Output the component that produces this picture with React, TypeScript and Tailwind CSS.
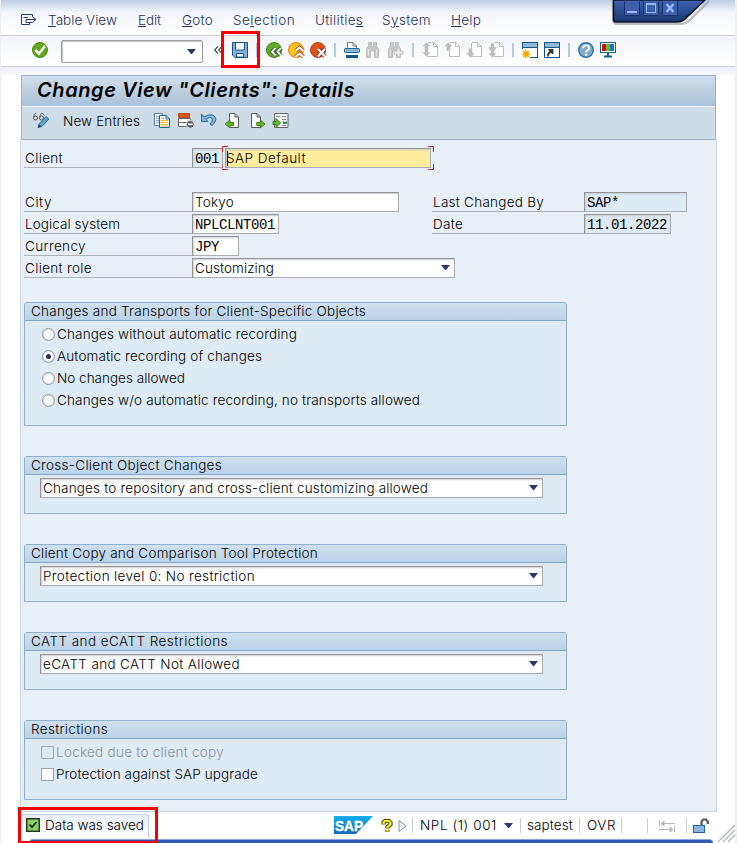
import { useLayoutEffect, useRef, useState, type ReactNode } from "react";

/* Text run whose tracking is adjusted so that it fills the given width. */
function T({ w, children, className = "" }: { w: number; children: ReactNode; className?: string }) {
  const ref = useRef<HTMLSpanElement>(null);
  const [spacing, setSpacing] = useState(0);
  useLayoutEffect(() => {
    const el = ref.current;
    if (!el) return;
    const n = (el.textContent ?? "").length;
    const natural = el.getBoundingClientRect().width - spacing * n;
    setSpacing((w - natural) / n);
  }, [w]);
  return (
    <span ref={ref} className={`inline-block shrink-0 whitespace-pre ${className}`} style={{ letterSpacing: `${spacing}px` }}>
      {children}
    </span>
  );
}

function Icon({ children, className = "mx-[3px]" }: { children: ReactNode; className?: string }) {
  return (
    <svg viewBox="0 0 16 16" className={`h-4 w-4 shrink-0 overflow-visible ${className}`} fill="none">
      {children}
    </svg>
  );
}

const Sep = () => (
  <div className="flex w-3 shrink-0 justify-center">
    <div className="h-[14px] w-0.5 bg-[#b5cde0]" />
  </div>
);

const Caret = ({ className = "" }: { className?: string }) => (
  <svg viewBox="0 0 9 5" className={`h-[5px] w-[9px] shrink-0 ${className}`}>
    <path d="M0 0H9L5 5H4Z" fill="#243a70" />
  </svg>
);

const mono = "font-['Liberation_Mono',monospace] text-[14px] tracking-[-0.4px] font-normal";

function Field({ className, children }: { className: string; children?: ReactNode }) {
  return (
    <div
      className={`flex h-5 shrink-0 items-center border border-[#a9adb1] border-t-[#929496] border-l-[#929496] pt-0.5 pl-0.5 leading-none shadow-[inset_1px_1px_2px_#c9ccd0] ${className}`}
    >
      {children}
    </div>
  );
}

function Label({ className = "w-[168px]", w, children }: { className?: string; w: number; children: string }) {
  return (
    <div className={`flex h-5 shrink-0 items-center border-b border-[#afb2b5] pt-0.5 pl-px ${className}`}>
      <T w={w}>{children}</T>
    </div>
  );
}

function Select({ className, w, children }: { className: string; w: number; children: string }) {
  return (
    <Field className={`justify-between bg-white pr-1 ${className}`}>
      <T w={w}>{children}</T>
      <Caret className="-mt-[3px]" />
    </Field>
  );
}

function Group({ title, w, className, children }: { title: string; w: number; className: string; children: ReactNode }) {
  return (
    <section className={`ml-[3px] w-[543px] shrink-0 rounded-t-[3px] border border-[#8fb0d0] bg-[#deeaf4] ${className}`}>
      <h2 className="flex h-[18px] items-center rounded-t-[2px] border-b border-[#83a5c8] bg-linear-to-b from-[#cfe0ef] to-[#bbd2e8] pl-1.5">
        <T w={w}>{title}</T>
      </h2>
      {children}
    </section>
  );
}

function Radio({ on, w, children }: { on?: boolean; w: number; children: string }) {
  return (
    <div className="flex h-[22px] items-center pl-[17px]">
      <div className="mr-0.5 mb-0.5 flex h-[13px] w-[13px] items-center justify-center rounded-full border border-[#92989e] bg-white shadow-[inset_0_0_2px_#b0b4b8]">
        {on && <div className="h-[5px] w-[5px] rounded-full bg-[#262b50]" />}
      </div>
      <T w={w}>{children}</T>
    </div>
  );
}

function Check({ off, w, children }: { off?: boolean; w: number; children: string }) {
  return (
    <div className={`flex h-[22px] items-center pl-4 ${off ? "text-[#8b9197]" : ""}`}>
      <div className={`mr-0.5 mb-0.5 h-[13px] w-[13px] border ${off ? "border-[#a5abb0] bg-[#dde7ef]" : "border-[#999ea3] bg-white"}`} />
      <T w={w}>{children}</T>
    </div>
  );
}

const OkIcon = () => (
  <svg viewBox="0 0 16 16" className="h-4 w-4 shrink-0">
    <circle cx="8" cy="8" r="7.5" fill="#62a71e" stroke="#438719" />
    <path d="M3.5 8L7 11.7L13 4" fill="none" stroke="#fff" strokeWidth="2.5" />
  </svg>
);

const SaveIcon = () => (
  <Icon>
    <path d="M.5.5H15.5V15.5H3L.5 13Z" fill="#86b3da" stroke="#12578c" />
    <path d="M3.5 1V8H12.5V1" fill="#fff" stroke="#12578c" />
    <path d="M4.5 15V11.5H11.5V15Z" fill="#fff" stroke="#12578c" />
  </Icon>
);

const BackIcon = () => (
  <Icon>
    <circle cx="8" cy="8" r="7.5" fill="#63ab25" stroke="#3f841f" />
    <path d="M9.5 6L6 9.7L9.5 13.5M15 6L11.5 9.7L15 13.5" stroke="#43692d" strokeWidth="4" />
    <path d="M9.5 6L6 9.7L9.5 13.5M15 6L11.5 9.7L15 13.5" stroke="#fff" strokeWidth="1.8" />
  </Icon>
);

const ExitIcon = () => (
  <Icon>
    <circle cx="8" cy="8" r="7.5" fill="#ffc31d" stroke="#e17b18" />
    <path d="M7.5 9L11.5 5.5L15.5 9M7.5 15L11.5 11.5L15.5 15" stroke="#c45b16" strokeWidth="4" />
    <path d="M7.5 9L11.5 5.5L15.5 9M7.5 15L11.5 11.5L15.5 15" stroke="#fff" strokeWidth="2" />
  </Icon>
);

const CancelIcon = () => (
  <Icon>
    <circle cx="8" cy="8" r="7.5" fill="#db5215" stroke="#b3441b" />
    <path d="M8 7L15 14.5M15 7L8 14.5" stroke="#8b2f18" strokeWidth="4" />
    <path d="M8 7L15 14.5M15 7L8 14.5" stroke="#fff" strokeWidth="2.2" />
  </Icon>
);

const PrintIcon = () => (
  <Icon>
    <path d="M3.5 7V.5H9L12.5 4V7" fill="#fff" stroke="#777" />
    <path d="M9 .5V4H12.5" stroke="#777" />
    <rect x=".5" y="6.5" width="15" height="4" rx="1" fill="#8db5d7" stroke="#1c6394" />
    <path d="M2 14.5H14" stroke="#12578c" strokeWidth="3" />
    <path d="M3 12.5H13" stroke="#fff" />
  </Icon>
);

const Binoculars = ({ plus }: { plus?: boolean }) => (
  <Icon className="mr-1 ml-0.5">
    <path d="M1.5 15.5V7L3.5 4V.5H6.5V5H8.5V.5H11.5V4L13.5 7V15.5H9.5V9H5.5V15.5Z" fill="#c9c9c9" stroke="#bdbdbd" />
    <path d="M3.5 7V14M11.5 7V14" stroke="#e4e4e4" />
    {plus && <path d="M10 6H13V9H16V12H13V15H10V12H7V9H10Z" fill="#eee" stroke="#bdbdbd" />}
  </Icon>
);

const PageNav = ({ dir }: { dir: "first" | "up" | "down" | "last" }) => (
  <Icon>
    <path d="M6 .5H11.5L15.5 4.5V14.5H5.5V1" fill="#fff" stroke="#bdbdbd" />
    <path d="M11.5 .5V4.5H15.5" stroke="#bdbdbd" />
    {dir === "first" && <path d="M4.5 0L9 4.5H6.5V10H9L4.5 15L0 10H2.5V4.5H0Z" fill="#bdbdbd" stroke="#fff" strokeWidth=".4" />}
    {dir === "up" && <path d="M4.5 0L9 4.5H6.5V9H2.5V4.5H0Z" fill="#bdbdbd" stroke="#fff" strokeWidth=".4" />}
    {dir === "down" && <path d="M4.5 16L0 11H2.5V6H6.5V11H9Z" fill="#bdbdbd" stroke="#fff" strokeWidth=".4" />}
    {dir === "last" && <path d="M4.5 16L0 11H2.5V9L0 5H2.5V1H6.5V5H9L6.5 9V11H9Z" fill="#bdbdbd" stroke="#fff" strokeWidth=".4" />}
  </Icon>
);

const SessionIcon = ({ link }: { link?: boolean }) => (
  <Icon>
    <rect x=".5" y=".5" width="15" height="15" fill="#fff" stroke="#12578c" />
    <path d="M1 3H15" stroke="#8fb5d9" strokeWidth="4" />
    <path d="M0 5.5H16" stroke="#12578c" />
    {link ? (
      <path d="M4.2 14.5Q3.5 10.5 8 9.5M4.5 8H8.5V12" stroke="#333" strokeWidth="1.8" />
    ) : (
      <>
        <rect x="-1" y="7" width="9" height="10" fill="#fff" />
        <path d="M4 7.5V16.5M-.5 12H8.5M1 9L7 15M7 9L1 15" stroke="#f5a400" strokeWidth="1.2" />
        <circle cx="4" cy="12" r="2.7" fill="#f7a900" />
      </>
    )}
  </Icon>
);

const HelpIcon = () => (
  <Icon>
    <circle cx="8" cy="8" r="7.3" fill="#82abd0" stroke="#2674a8" strokeWidth="1.4" />
    <path d="M5.2 6.2Q5.2 3.3 8.2 3.3T11 6Q11 7.5 9.5 8.2T8.1 10.4M8.1 11.8V13.8" stroke="#fff" strokeWidth="1.8" />
  </Icon>
);

const MonitorIcon = () => (
  <Icon>
    <rect x=".5" y=".5" width="15" height="10" fill="#fff" stroke="#12638f" />
    <path d="M2 2H6V9H2Z" fill="#d30b13" />
    <path d="M6 2H10V9H6Z" fill="#75b72a" />
    <path d="M10 2H14V9H10Z" fill="#087bc4" />
    <path d="M8 11V14M4 14.5H12" stroke="#12638f" strokeWidth="2" />
  </Icon>
);

const GlassesIcon = () => (
  <Icon className="ml-[11px] mr-[14px]">
    <path d="M.5 4L2 .5H3M6.5 4L8 .5H10L11.5 3" stroke="#737373" />
    <circle cx="2.5" cy="5" r="2" stroke="#555" />
    <circle cx="8.5" cy="5" r="2" stroke="#555" />
    <path d="M5 14.5L6 11L13 3.5L15.8 6L9 13.5Z" fill="#65a2d0" stroke="#2370a6" />
    <path d="M5 14.8L6 11.5L8.5 13.5Z" fill="#3d474d" />
  </Icon>
);

const CopyIcon = () => (
  <Icon className="ml-[14px] mr-2">
    <path d="M.5 .5H8.5V12.5H.5Z" fill="#fff" stroke="#527b9e" />
    <path d="M2 3.5H5M2 5.5H5M2 7.5H5M2 9.5H5" stroke="#82a9ca" />
    <path d="M5.5 2.5H12L15.5 6V14.5H5.5Z" fill="#fff" stroke="#176399" />
    <path d="M12 2.5V6H15.5" stroke="#176399" />
    <path d="M7 7.5H14M7 9.5H14M7 11.5H14M7 5.5H10" stroke="#f2bd1b" />
    <path d="M7 13H14" stroke="#f2bd1b" />
  </Icon>
);

const DeleteIcon = () => (
  <Icon className="mr-[7px]">
    <path d="M.5 5.5H12.5V13.5H.5ZM1 9.5H12" fill="#fff" stroke="#67696a" />
    <path d="M.5 .5H11.5V4.5H.5Z" fill="#dc5415" stroke="#b54816" />
    <circle cx="12.3" cy="11.3" r="4" fill="#5e5d5e" stroke="#e1e3e4" />
    <path d="M10 11.3H14.6" stroke="#fff" strokeWidth="1.7" />
  </Icon>
);

const UndoIcon = () => (
  <Icon className="mr-2">
    <path d="M.5 1V8.5H7L5 6.3Q9.5 3 11.3 6Q12 8.5 9 11L11 12.5Q15.8 8.5 14.5 4.5Q11-.8 3.2 4Z" fill="#86b2d7" stroke="#236c9e" />
  </Icon>
);

const EntryIcon = ({ dir, className }: { dir: "prev" | "next"; className: string }) => (
  <Icon className={className}>
    <path d={dir === "prev" ? "M4.5 .5H10L13.5 4V14.5H4.5Z" : "M.5 .5H6L9.5 4V14.5H.5Z"} fill="#fff" stroke="#565c60" />
    <path d={dir === "prev" ? "M10 .5V4H13.5" : "M6 .5V4H9.5"} stroke="#565c60" />
    {dir === "prev" ? (
      <path d="M.2 11L5 7V9.5H8.5V12.5H5V15Z" fill="#70b62c" stroke="#367b1b" />
    ) : (
      <path d="M14 11L9.3 7V9.5H5.8V12.5H9.3V15Z" fill="#70b62c" stroke="#367b1b" />
    )}
  </Icon>
);

const PositionIcon = () => (
  <Icon className="ml-[6px]">
    <path d="M1.5 .5H15V14.5H1.5Z" fill="#eef2f4" stroke="#656b6e" />
    <path d="M3 3.5H7M9 3.5H13M9 6.5H13M9 12.5H13" stroke="#85898c" />
    <path d="M10 9.7H14" stroke="#178342" strokeWidth="2" />
    <path d="M7.5 10L3 5.5V8.5H0V11.5H3V14.5Z" fill="#70b62c" stroke="#367b1b" />
  </Icon>
);

function WindowControls() {
  return (
    <svg viewBox="0 0 100 26" className="absolute top-0 left-[609px] h-[26px] w-[100px]">
      <defs>
        <linearGradient id="cap" x2="0" y2="1">
          <stop stopColor="#4062ae" />
          <stop offset="1" stopColor="#193670" />
        </linearGradient>
      </defs>
      <path d="M3 0V22L6 24H70Q76 24 80 20L99 1" fill="none" stroke="#8b8e96" strokeWidth="2" opacity=".6" />
      <path d="M3.5 0H95L77 17Q73 22 67 22H6Q3.5 22 3.5 19Z" fill="url(#cap)" stroke="#081222" strokeWidth="1.5" />
      <g fill="#3f60a8" stroke="#192f65">
        <rect x="14.5" y=".5" width="15" height="15" rx="1" />
        <rect x="33.5" y=".5" width="15" height="15" rx="1" />
        <rect x="52.5" y=".5" width="15" height="15" rx="1" />
      </g>
      <path d="M17 12H27" stroke="#94b7ff" strokeWidth="2" />
      <rect x="36.5" y="4" width="9" height="8.5" fill="none" stroke="#94b7ff" />
      <path d="M36 4H46" stroke="#94b7ff" strokeWidth="2" />
      <path d="M56.5 4L63.5 12M63.5 4L56.5 12" stroke="#94b7ff" strokeWidth="2.4" />
    </svg>
  );
}

function MenuBar() {
  return (
    <nav className="flex h-[35px] shrink-0 items-center bg-linear-to-b from-[#bdcde2] via-[#f4f6fb] via-35% to-white pt-[6px] pl-[21px] text-[#1f3162]">
      <svg viewBox="0 0 16 12" className="mr-[11px] mb-px h-3 w-4 shrink-0" fill="none" stroke="#243a70">
        <path d="M11.5 2.5V.5H.5V10.5H8.5V8M2.5 3.5H7M5 5.5H15L11.5 8.5H5V5.5M11 2.5L15 5.5" />
      </svg>
      <T w={69} className="mr-[21px]"><u>T</u>able View</T>
      <T w={23} className="mr-[21px]"><u>E</u>dit</T>
      <T w={31} className="mr-5"><u>G</u>oto</T>
      <T w={62} className="mr-5">Se<u>l</u>ection</T>
      <T w={48} className="mr-[19px]">Utilitie<u>s</u></T>
      <T w={49} className="mr-5">S<u>y</u>stem</T>
      <T w={30}><u>H</u>elp</T>
    </nav>
  );
}

function Toolbar() {
  return (
    <div className="flex h-8 shrink-0 items-center border-y border-[#c7ccd9] bg-linear-to-b from-[#f3f5fa] to-white pb-0.5 pl-8">
      <OkIcon />
      <div className="mt-[3px] ml-[13px] flex h-[23px] w-[142px] shrink-0 items-center justify-end rounded-[2px] border border-[#9a9da1] bg-white pr-1.5 shadow-[inset_1px_1px_1px_#bfc2c6]">
        <Caret />
      </div>
      <svg viewBox="0 0 8 8" className="mr-[7px] ml-[11px] h-2 w-2 shrink-0" fill="none" stroke="#555" strokeWidth="1.2">
        <path d="M4 .5L.7 4L4 7.5M8 .5L4.7 4L8 7.5" />
      </svg>
      <SaveIcon />
      <Sep />
      <BackIcon />
      <ExitIcon />
      <CancelIcon />
      <Sep />
      <PrintIcon />
      <Binoculars />
      <Binoculars plus />
      <Sep />
      <PageNav dir="first" />
      <PageNav dir="up" />
      <PageNav dir="down" />
      <PageNav dir="last" />
      <Sep />
      <SessionIcon />
      <SessionIcon link />
      <Sep />
      <HelpIcon />
      <MonitorIcon />
    </div>
  );
}

const StatusSep = ({ className }: { className: string }) => <div className={`h-[15px] w-px shrink-0 bg-[#c9cbd0] ${className}`} />;

function StatusBar() {
  return (
    <footer className="flex h-[27px] shrink-0 items-center pl-[21px]">
      <div className="flex h-[24px] w-[128px] shrink-0 items-center rounded-t-[3px] border-t border-r border-[#c3d0e1] bg-linear-to-b from-[#e9eff7] to-white pl-[5px]">
        <svg viewBox="0 0 14 14" className="mr-[5px] mb-0.5 h-3.5 w-3.5 shrink-0">
          <rect x=".75" y=".75" width="12.5" height="12.5" fill="#8bd064" stroke="#26372a" strokeWidth="1.5" />
          <path d="M3.5 6.5L6 9.3L10.5 4" fill="none" stroke="#14261d" strokeWidth="1.7" />
        </svg>
        <T w={99}>Data was saved</T>
      </div>
      <svg viewBox="0 0 39 18" className="ml-[185px] mb-px h-[18px] w-[39px] shrink-0">
        <defs>
          <linearGradient id="sap" x2="0" y2="1">
            <stop stopColor="#12b0ec" />
            <stop offset="1" stopColor="#1668b8" />
          </linearGradient>
        </defs>
        <path d="M0 0H39L22 18H0Z" fill="url(#sap)" />
        <text x="1" y="14.5" fontFamily="Liberation Sans, sans-serif" fontWeight="bold" fontSize="15" textLength="28" lengthAdjust="spacingAndGlyphs" fill="#fff" stroke="#fff" strokeWidth=".4">SAP</text>
      </svg>
      <svg viewBox="0 0 12 14" className="ml-2 h-3.5 w-3 shrink-0">
        <path d="M2.5 5.5V3.5L4 2H8L9.5 3.5V5.5L6.5 8V9.5M6.5 11V12.8" fill="none" stroke="#111" strokeWidth="4" />
        <path d="M2.5 5.5V3.5L4 2H8L9.5 3.5V5.5L6.5 8V9.5M6.5 11V12.8" fill="none" stroke="#ffeb00" strokeWidth="2.4" />
      </svg>
      <svg viewBox="0 0 9 12" className="ml-[5px] h-3 w-[9px] shrink-0">
        <path d="M1 .5L8 6L1 11.5Z" fill="#f5f9fe" stroke="#758eae" />
      </svg>
      <StatusSep className="ml-[5px] mr-[7px]" />
      <T w={77}>NPL (1) 001</T>
      <Caret className="ml-[7px] mr-[7px]" />
      <StatusSep className="mr-1.5" />
      <T w={46}>saptest</T>
      <StatusSep className="ml-1.5 mr-[7px]" />
      <T w={29}>OVR</T>
      <StatusSep className="ml-[5px]" />
      <StatusSep className="ml-[25px] mr-[11px]" />
      <svg viewBox="0 0 16 12" className="h-3 w-4 shrink-0" fill="none" stroke="#b9b9b9">
        <path d="M.5 0V6M15.5 6V12M2 3.5H16M0 9.5H14" />
        <path d="M5 1L2 3.5L5 6ZM11 7L14 9.5L11 12Z" fill="#b9b9b9" />
      </svg>
      <StatusSep className="ml-[11px] mr-1.5" />
      <svg viewBox="0 0 16 16" className="h-4 w-4 shrink-0" fill="none">
        <path d="M8.5 8V3.5L10 1.5H13L14.8 3.5V6" stroke="#565656" strokeWidth="2.2" />
        <rect x=".5" y="7.5" width="11" height="7" fill="#8bb8dc" stroke="#1d669c" />
      </svg>
    </footer>
  );
}

export default function App() {
  return (
    <main className="relative flex h-[843px] w-[737px] flex-col overflow-hidden border-l border-[#eef0f3] bg-white pr-0 font-['Inter','Noto_Sans_CJK_JP',sans-serif] text-[13.5px] leading-none font-light text-black">
      <div className="-ml-px flex flex-1 flex-col">
        <MenuBar />
        <Toolbar />
        <div className="h-2 shrink-0 bg-linear-to-b from-[#edf0f7] to-[#f7f8fc]" />
        <header className="ml-[21px] h-[65px] w-[695px] shrink-0 border border-[#9eb0c4] bg-[#cddce7]">
          <h1 className="flex h-[31px] items-center border-b border-[#f1f6fa] bg-linear-to-b from-[#d0dfed] via-[#bdd0e0] to-[#a9c2dc] pb-0.5 pl-[15px] text-[20px] font-semibold italic">
            <T w={318}>Change View "Clients": Details</T>
          </h1>
          <div className="flex h-8 items-center pb-1">
            <GlassesIcon />
            <T w={77} className="pt-0.5">New Entries</T>
            <CopyIcon />
            <DeleteIcon />
            <UndoIcon />
            <EntryIcon dir="prev" className="mr-2.5" />
            <EntryIcon dir="next" className="" />
            <PositionIcon />
          </div>
        </header>
        <div className="ml-5 flex h-[672px] w-[697px] shrink-0 flex-col border-x border-b border-[#ccd6e2] bg-[#e8eff6] pt-2">
          <div className="flex shrink-0 pl-[3px]">
            <Label w={38}>Client</Label>
            <Field className={`mr-0.5 w-[31px] bg-[#deeaf4] ${mono}`}>001</Field>
            <div className="relative">
              <Field className="w-[206px] bg-[#ffed9e]">
                <T w={80} className="-ml-0.5">SAP Default</T>
              </Field>
              <svg viewBox="0 0 212 24" className="absolute -top-0.5 -left-[3px] h-6 w-[212px]" fill="none">
                <path d="M6 .5H.5V6M0 18V23.5H6M206 .5H211.5V6M211.5 18V23.5H206" stroke="#e31b23" />
                <path d="M5.5 5V20" stroke="#111" />
              </svg>
            </div>
          </div>
          <div className="mt-6 flex shrink-0 gap-[33px] pl-[3px]">
            <div className="flex w-[375px] flex-col gap-0.5">
              <div className="flex"><Label w={27}>City</Label><Field className="w-[207px] bg-white"><T w={39}>Tokyo</T></Field></div>
              <div className="flex"><Label w={95}>Logical system</Label><Field className={`w-[87px] bg-white ${mono}`}>NPLCLNT001</Field></div>
              <div className="flex"><Label w={61}>Currency</Label><Field className={`w-[47px] bg-white ${mono}`}>JPY</Field></div>
              <div className="flex"><Label w={67}>Client role</Label><Select className="w-[263px]" w={79}>Customizing</Select></div>
            </div>
            <div className="flex flex-col gap-0.5">
              <div className="flex"><Label className="w-[152px]" w={111}>Last Changed By</Label><Field className={`w-[103px] bg-[#deeaf4] ${mono}`}>SAP*</Field></div>
              <div className="flex"><Label className="w-[152px]" w={30}>Date</Label><Field className={`w-[87px] bg-[#deeaf4] ${mono}`}>11.01.2022</Field></div>
            </div>
          </div>
          <Group title="Changes and Transports for Client-Specific Objects" w={335} className="mt-6 h-[124px]">
            <div className="pt-[3px]">
              <Radio w={240}>Changes without automatic recording</Radio>
              <Radio on w={205}>Automatic recording of changes</Radio>
              <Radio w={128}>No changes allowed</Radio>
              <Radio w={363}>Changes w/o automatic recording, no transports allowed</Radio>
            </div>
          </Group>
          <Group title="Cross-Client Object Changes" w={191} className="mt-[30px] h-[58px]">
            <Select className="mt-[3px] ml-[15px] w-[503px]" w={385}>Changes to repository and cross-client customizing allowed</Select>
          </Group>
          <Group title="Client Copy and Comparison Tool Protection" w={287} className="mt-[30px] h-[58px]">
            <Select className="mt-[3px] ml-[15px] w-[503px]" w={212}>Protection level 0: No restriction</Select>
          </Group>
          <Group title="CATT and eCATT Restrictions" w={197} className="mt-[30px] h-[58px]">
            <Select className="mt-[3px] ml-[15px] w-[503px]" w={197}>eCATT and CATT Not Allowed</Select>
          </Group>
          <Group title="Restrictions" w={77} className="mt-[30px] h-[80px]">
            <div className="pt-[3px]">
              <Check off w={168}>Locked due to client copy</Check>
              <Check w={202}>Protection against SAP upgrade</Check>
            </div>
          </Group>
        </div>
        <StatusBar />
        <div className="ml-[29px] h-1 w-[684px] shrink-0 rounded-t-[6px] border-t border-[#8ba6dc] bg-[#3159b4]" />
      </div>
      <div className="absolute top-0 right-0 h-full w-0.5 bg-[#f0f1f4]" />
      <WindowControls />
      <svg viewBox="0 0 20 20" className="absolute right-0 bottom-0 h-5 w-5" stroke="#aeb3bd" strokeWidth="1.2">
        <path d="M1 19L18 2M6 19L18 7M11 19L18 12" />
      </svg>
      <div className="absolute top-[31px] left-[220px] h-[37px] w-[39px] border-[3px] border-[#f80000]" />
      <div className="absolute top-[807px] left-[17px] h-[37px] w-[140px] border-[3px] border-[#f80000]" />
    </main>
  );
}
